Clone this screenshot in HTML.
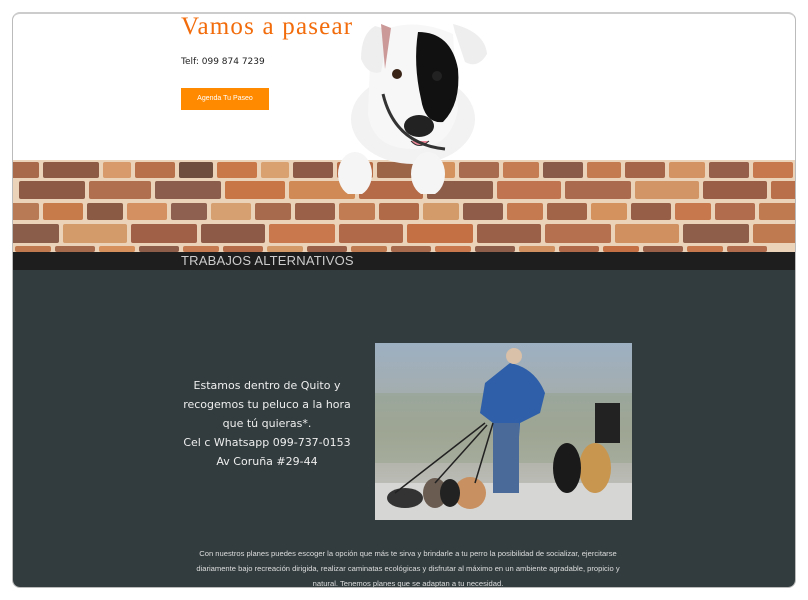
<!DOCTYPE html>
<html><head><meta charset="utf-8"><style>
*{margin:0;padding:0;box-sizing:border-box}
body{width:808px;height:600px;background:#fff;position:relative;overflow:hidden;font-family:"Liberation Sans",sans-serif}
#frame{position:absolute;left:12px;top:12px;width:784px;height:576px;border:1px solid #bbb;border-top:2px solid #ccc;border-radius:8px;overflow:hidden;background:#fff}
.a{position:absolute}
#main{left:0;top:256px;width:784px;height:320px;background:#323c3e}
#bar{left:0;top:238px;width:784px;height:18px;background:#1e1e1e;color:#ccc;font-size:13px;line-height:18px;padding-left:168px;letter-spacing:.2px}
#brick{left:0;top:146px;width:784px;height:92px;background:#ead3b8}
.row{position:absolute;left:0;width:784px;display:flex;gap:4px}
.row div{height:100%;border-radius:2px;flex:none}
h1{position:absolute;left:168px;top:-1px;font-family:"Liberation Serif",serif;font-weight:normal;font-size:25px;color:#f26c0c;letter-spacing:1.2px}
.tel{left:168px;top:43px;font-size:9px;color:#222;font-family:"DejaVu Sans",sans-serif}
.btn{left:168px;top:74px;width:88px;height:22px;background:#ff8a00;color:#fff;font-size:7px;line-height:22px;text-align:center}
.txt{left:144px;top:362px;width:220px;color:#eee;text-align:center;font-size:11px;line-height:19px;font-family:"DejaVu Sans",sans-serif}
.foot{left:175px;top:532px;width:440px;color:#ddd;text-align:center;font-size:7.6px;line-height:15px}
</style></head><body>
<div id="frame">
<div class="a" id="main"></div>
<div class="a" id="brick">
<div class="row" style="top:2px;height:16px;margin-left:-4px">
<div style="width:30px;background:#a8694a"></div><div style="width:56px;background:#8c5a45"></div><div style="width:28px;background:#d89a6a"></div><div style="width:40px;background:#b7704a"></div><div style="width:34px;background:#6e4c3e"></div><div style="width:40px;background:#c9784a"></div><div style="width:28px;background:#d9a070"></div><div style="width:40px;background:#8d5a48"></div><div style="width:36px;background:#b86c45"></div><div style="width:40px;background:#9c6548"></div><div style="width:34px;background:#d4935e"></div><div style="width:40px;background:#a86b4f"></div><div style="width:36px;background:#c57c52"></div><div style="width:40px;background:#8a5b49"></div><div style="width:34px;background:#c47b50"></div><div style="width:40px;background:#a46548"></div><div style="width:36px;background:#d49363"></div><div style="width:40px;background:#965f4a"></div><div style="width:40px;background:#c7784d"></div>
</div>
<div class="row" style="top:21px;height:18px;margin-left:6px">
<div style="width:66px;background:#8c5a45"></div><div style="width:62px;background:#b07050"></div><div style="width:66px;background:#8b5d4c"></div><div style="width:60px;background:#c87645"></div><div style="width:66px;background:#d08a55"></div><div style="width:64px;background:#b56a48"></div><div style="width:66px;background:#8d5d4a"></div><div style="width:64px;background:#c07550"></div><div style="width:66px;background:#a96a4d"></div><div style="width:64px;background:#d29666"></div><div style="width:64px;background:#9a5e47"></div><div style="width:64px;background:#b9704a"></div>
</div>
<div class="row" style="top:43px;height:17px;margin-left:-2px">
<div style="width:28px;background:#b87a55"></div><div style="width:40px;background:#c77a4a"></div><div style="width:36px;background:#8a5a45"></div><div style="width:40px;background:#d49060"></div><div style="width:36px;background:#8d6050"></div><div style="width:40px;background:#d6a070"></div><div style="width:36px;background:#a86a4c"></div><div style="width:40px;background:#9a6048"></div><div style="width:36px;background:#c27c54"></div><div style="width:40px;background:#b06a48"></div><div style="width:36px;background:#d39a6a"></div><div style="width:40px;background:#8e5c48"></div><div style="width:36px;background:#c57a4f"></div><div style="width:40px;background:#a26448"></div><div style="width:36px;background:#d4925e"></div><div style="width:40px;background:#975e47"></div><div style="width:36px;background:#c7784d"></div><div style="width:40px;background:#b06c4d"></div><div style="width:40px;background:#c07a50"></div>
</div>
<div class="row" style="top:64px;height:19px;margin-left:-20px">
<div style="width:66px;background:#8a5c4a"></div><div style="width:64px;background:#d39a6a"></div><div style="width:66px;background:#a06048"></div><div style="width:64px;background:#8c5a46"></div><div style="width:66px;background:#c8784c"></div><div style="width:64px;background:#b06a4a"></div><div style="width:66px;background:#c57044"></div><div style="width:64px;background:#9a6048"></div><div style="width:66px;background:#b57050"></div><div style="width:64px;background:#d09060"></div><div style="width:66px;background:#8e5e4a"></div><div style="width:64px;background:#c07a50"></div><div style="width:64px;background:#a86a4c"></div>
</div>
<div class="row" style="top:86px;height:6px;margin-left:2px">
<div style="width:36px;background:#c0794f"></div><div style="width:40px;background:#a5694c"></div><div style="width:36px;background:#d5905c"></div><div style="width:40px;background:#8d5d4a"></div><div style="width:36px;background:#c57a50"></div><div style="width:40px;background:#b46c48"></div><div style="width:36px;background:#d39a68"></div><div style="width:40px;background:#9a6048"></div><div style="width:36px;background:#c07a50"></div><div style="width:40px;background:#a86a4c"></div><div style="width:36px;background:#c8784c"></div><div style="width:40px;background:#8e5e4a"></div><div style="width:36px;background:#d09060"></div><div style="width:40px;background:#b06a4a"></div><div style="width:36px;background:#c57044"></div><div style="width:40px;background:#9a6048"></div><div style="width:36px;background:#c7784d"></div><div style="width:40px;background:#b06c4d"></div>
</div>
</div>
<!-- dog -->
<svg class="a" style="left:300px;top:0" width="190" height="180" viewBox="0 0 190 180">
<ellipse cx="100" cy="105" rx="62" ry="45" fill="#f2f2f2"/>
<path d="M58 22 Q95 0 140 20 L145 95 Q138 135 100 135 Q60 135 55 100 Z" fill="#f7f7f7"/>
<path d="M62 12 Q48 20 48 45 Q55 62 68 58 L76 16 Z" fill="#eee"/>
<path d="M68 10 L72 55 L78 14Z" fill="#c99"/>
<path d="M140 10 Q172 18 174 40 Q165 55 152 48 L142 18Z" fill="#eee"/>
<path d="M105 18 Q138 18 145 55 Q148 90 130 108 Q112 110 108 85 Q100 50 105 18Z" fill="#111"/>
<circle cx="84" cy="60" r="5" fill="#3a2418"/>
<circle cx="124" cy="62" r="5" fill="#222"/>
<ellipse cx="106" cy="112" rx="15" ry="11" fill="#222"/>
<path d="M98 127 Q106 136 116 127" fill="#e89" stroke="#333"/>
<path d="M70 80 Q82 130 132 135" stroke="#333" stroke-width="3" fill="none"/>
<ellipse cx="42" cy="160" rx="17" ry="22" fill="#f5f5f5"/>
<ellipse cx="115" cy="160" rx="17" ry="22" fill="#f5f5f5"/>
</svg>
<h1>Vamos a pasear</h1>
<div class="a tel">Telf: 099 874 7239</div>
<div class="a btn">Agenda Tu Paseo</div>
<div class="a" id="bar">TRABAJOS ALTERNATIVOS</div>
<div class="a txt">Estamos dentro de Quito y<br>recogemos tu peluco a la hora<br>que tú quieras*.<br>Cel c Whatsapp 099-737-0153<br>Av Coruña #29-44</div>
<svg class="a" style="left:362px;top:329px" width="257" height="177" viewBox="0 0 257 177">
<defs><linearGradient id="g" x1="0" y1="0" x2="0" y2="1"><stop offset="0" stop-color="#9db0c2"/><stop offset=".5" stop-color="#a8aba0"/><stop offset="1" stop-color="#c8c8c4"/></linearGradient></defs>
<rect width="257" height="177" fill="url(#g)"/>
<rect x="0" y="50" width="257" height="70" fill="#8b9a7a" opacity=".35"/>
<rect x="0" y="140" width="257" height="37" fill="#d6d6d4"/>
<path d="M135 20 Q160 25 170 50 L165 70 L145 80 L140 150 L118 150 L118 80 L105 70 L110 40Z" fill="#2f5fa8"/>
<rect x="118" y="80" width="26" height="70" fill="#4a6a9a"/>
<circle cx="139" cy="13" r="8" fill="#d9c0a8"/>
<rect x="220" y="60" width="25" height="40" fill="#222"/>
<ellipse cx="220" cy="125" rx="16" ry="25" fill="#c8964f"/>
<ellipse cx="192" cy="125" rx="14" ry="25" fill="#1a1a1a"/>
<ellipse cx="30" cy="155" rx="18" ry="10" fill="#333"/>
<ellipse cx="60" cy="150" rx="12" ry="15" fill="#6a5c50"/>
<ellipse cx="95" cy="150" rx="16" ry="16" fill="#c89060"/>
<ellipse cx="75" cy="150" rx="10" ry="14" fill="#222"/>
<path d="M20 150 L110 80 M60 140 L112 82 M100 140 L118 80" stroke="#222" stroke-width="1.5"/>
</svg>
<div class="a foot">Con nuestros planes puedes escoger la opción que más te sirva y brindarle a tu perro la posibilidad de socializar, ejercitarse diariamente bajo recreación dirigida, realizar caminatas ecológicas y disfrutar al máximo en un ambiente agradable, propicio y natural. Tenemos planes que se adaptan a tu necesidad.</div>
</div>
</body></html>
